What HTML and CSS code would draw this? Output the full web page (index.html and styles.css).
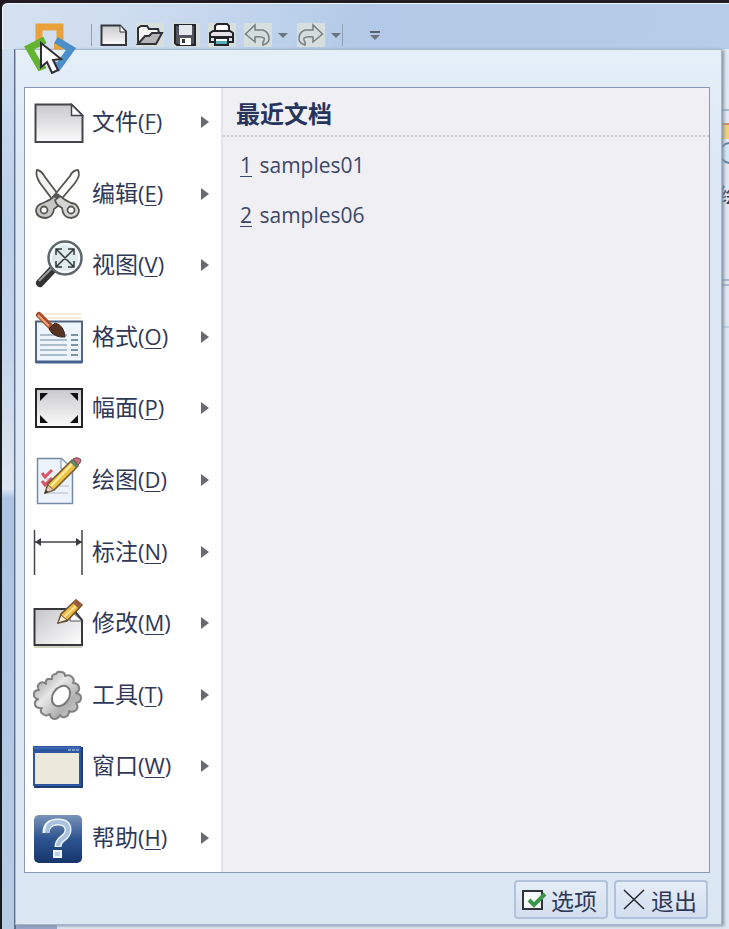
FILE: index.html
```html
<!DOCTYPE html>
<html lang="zh-CN">
  <head>
    <meta charset="UTF-8" />
    <meta name="viewport" content="width=device-width, initial-scale=1.0" />
    <title>菜单</title>
    <link rel="stylesheet" href="styles.css">
  </head>
  <body>
    <svg width="0" height="0" class="defs">
      <defs>
        <linearGradient id="paper" x1="0" y1="0" x2="1" y2="1">
          <stop offset="0" stop-color="#c4c4c8" />
          <stop offset=".55" stop-color="#e6e6e8" />
          <stop offset="1" stop-color="#fff" />
        </linearGradient>
        <linearGradient id="paperDown" x1="0" y1="0" x2="0" y2="1">
          <stop offset="0" stop-color="#c9c9cc" />
          <stop offset="1" stop-color="#fbfbfb" />
        </linearGradient>
        <linearGradient id="metal" x1="0" y1="0" x2="1" y2="1">
          <stop offset="0" stop-color="#8e8e8e" />
          <stop offset=".4" stop-color="#e8e8e8" />
          <stop offset=".7" stop-color="#b0b0b0" />
          <stop offset="1" stop-color="#dcdcdc" />
        </linearGradient>
        <linearGradient id="blue" x1="0" y1="0" x2="0" y2="1">
          <stop offset="0" stop-color="#7893b8" />
          <stop offset=".5" stop-color="#2d5490" />
          <stop offset="1" stop-color="#16356b" />
        </linearGradient>
      </defs>
    </svg>

    <div class="window">
      <div class="side"></div>
      <header class="toolbar">
        <button class="logo" aria-label="菜单">
          <svg width="56" height="56" viewBox="0 0 56 56">
            <g fill="none" stroke-width="7">
              <path d="M17 26V9h21v19h-6" stroke="#e9a23b" />
              <path d="M34 22l15 9-13 18-5-3" stroke="#4a8fca" />
              <path d="M23 22L7 30l11 19 5-2" stroke="#62b32e" />
            </g>
            <path d="M19 25v24l6-5 5 11 6-3-5-10 8-1z" fill="#fff" stroke="#332c33" stroke-width="2" />
          </svg>
        </button>
        <span class="line"></span>
        <button class="tool" aria-label="新建">
          <svg width="28" height="24" viewBox="0 0 28 24"><path d="M1.5 2.5H20l6 6V22H1.500z" fill="url(#paperDown)" stroke="#36373d" stroke-width="2" /><path d="M20 2v7h6z" fill="#fff" stroke="#36373d" /></svg>
        </button>
        <button class="tool tint" aria-label="打开">
          <svg width="28" height="24" viewBox="0 0 28 24"><path d="M2 20V5l3-2h6l2 3h9l1 4" fill="#f5f5f5" stroke="#303038" stroke-width="2" /><path d="M2 21l7-8h4l3-3h10l-6 11z" fill="#b5b5b8" stroke="#303038" stroke-width="2" /></svg>
        </button>
        <button class="tool tint" aria-label="保存">
          <svg width="28" height="24" viewBox="0 0 28 24"><path d="M3 2h20v20H5l-2-2z" fill="#51545f" stroke="#24242b" stroke-width="2" /><path d="M7 2h13v10H7z" fill="#e4e8ef" /><path d="M8 15h11v7H8z" fill="#fff" /><path d="M10 16h3v4h-3z" fill="#33353d" /></svg>
        </button>
        <button class="tool tint" aria-label="打印">
          <svg width="28" height="24" viewBox="0 0 28 24"><path d="M2 10l3-2h17l3 2v9H2z" fill="#e4e1e6" stroke="#24242b" stroke-width="2" /><path d="M7 8V3l2-2h10l2 2v5z" fill="#fff" stroke="#24242b" stroke-width="2" /><path d="M2 14h23" stroke="#24242b" stroke-width="2" /><path d="M7 16h13v6H7z" fill="#56aeb9" stroke="#24242b" stroke-width="2" /><path d="M8 17h11" stroke="#fff" stroke-width="2" /></svg>
        </button>
        <button class="tool wide tint" aria-label="撤消">
          <svg width="28" height="24" viewBox="0 0 28 24"><path d="M1.5 11L11 2v5h8q6 2 6 9 0 4-6 6v-3q2-2 1-4-2-2-9-1v5z" fill="#d5dedf" stroke="#777e83" stroke-width="1.5" /></svg>
          <i class="drop"></i>
        </button>
        <button class="tool wide tint" aria-label="重做">
          <svg width="28" height="24" viewBox="0 0 28 24"><path d="M25.5 11L16 2v5H8q-6 2-6 9 0 4 6 6v-3q-2-2-1-4 2-2 9-1v5z" fill="#d5dedf" stroke="#777e83" stroke-width="1.5" /></svg>
          <i class="drop"></i>
        </button>
        <span class="line"></span>
        <button class="more" aria-label="更多"><i></i><i class="drop"></i></button>
      </header>

      <div class="ribbon">
        <svg width="10" height="280" viewBox="0 0 10 280">
          <path d="M0 61h10M0 231h10M0 236h10" stroke="#9ba9bd" stroke-width="1.5" />
          <path d="M0 76h10v14H0z" fill="#f2d173" />
          <path d="M0 75h10" stroke="#d5885c" stroke-width="2" />
          <circle cx="11" cy="104" r="10" fill="#d3e8f7" stroke="#62819f" stroke-width="2" />
          <path d="M0 278h10" stroke="#a9b8cc" />
        </svg>
        <span class="ribbon-label">绘</span>
      </div>

      <main class="popup">
        <div class="panel">
          <nav class="menu">
            <button class="item">
              <svg width="54" height="56" viewBox="0 0 54 56"><path d="M3.5 10.5h36l11 11V48h-47z" fill="url(#paperDown)" stroke="#44444a" stroke-width="2" /><path d="M39.5 10.5v11h11z" fill="#fff" stroke="#44444a" stroke-width="1.5" /></svg>
              <span class="name">文件<span class="key">(<u>F</u>)</span></span>
            </button>
            <button class="item">
              <svg width="54" height="56" viewBox="0 0 54 56"><g stroke="#55564f" stroke-width="1.8"><path d="M5 4q4 0 8 7l15 20-5 6L8 17Q3 9 5 4z" fill="#f2f3f2" /><path d="M46 4q-5 0-8 6L21 31l5 6 17-20q6-8 3-13z" fill="#fff" /><path d="M23 30l5 5q-1 5-6 8-1 8-8 9-9 0-10-7 0-6 7-8 6-2 12-7z" fill="#c8c9c6" /><path d="M28 30l-5 4q1 5 7 8 1 10 9 10 8-1 8-8-2-7-8-7-5-2-11-7z" fill="#d5d6d3" /><circle cx="12" cy="44" r="3.5" fill="#fff" /><circle cx="39" cy="44" r="3.5" fill="#fff" /><circle cx="25.5" cy="30" r="1.5" fill="#4d557b" /></g></svg>
              <span class="name">编辑<span class="key">(<u>E</u>)</span></span>
            </button>
            <button class="item">
              <svg width="54" height="56" viewBox="0 0 54 56"><path d="M22 31L8 46" stroke="#333" stroke-width="8" stroke-linecap="round" /><path d="M20 31L7 44" stroke="#9b9b9b" stroke-width="2" /><circle cx="33" cy="21" r="16.5" fill="#dfeaec" stroke="#5e686a" stroke-width="2.5" /><circle cx="33" cy="21" r="14" fill="none" stroke="#f8fbfb" stroke-width="2" /><path d="M24 12l18 18M42 12L24 30M24 18v-6h6M36 12h6v6M24 24v6h6M36 30h6v-6" fill="none" stroke="#343a3c" stroke-width="1.5" /></svg>
              <span class="name">视图<span class="key">(<u>V</u>)</span></span>
            </button>
            <button class="item">
              <svg width="54" height="56" viewBox="0 0 54 56"><path d="M10 5h39M14 9h35" stroke="#ead6b9" /><path d="M4 12.5h46V53H4z" fill="#edf4fb" stroke="#526583" stroke-width="2" /><path d="M4 53h46" stroke="#44628f" stroke-width="3" /><path d="M8 26h27M8 31h27M8 36h27M8 41h27M8 46h27" stroke="#99aabd" stroke-width="1.5" /><path d="M39 26h7M39 31h7M39 36h7M39 41h7M39 46h7" stroke="#56718d" stroke-width="1.5" /><path d="M7 6l14 14" stroke="#a64b28" stroke-width="6" stroke-linecap="round" /><path d="M6 6l11 11" stroke="#f0a47c" stroke-width="2" /><path d="M17 20l6-6q9 2 10 14-11 1-16-8z" fill="#593322" stroke="#34231c" /></svg>
              <span class="name">格式<span class="key">(<u>O</u>)</span></span>
            </button>
            <button class="item">
              <svg width="54" height="56" viewBox="0 0 54 56"><path d="M4 9h46v38H4z" fill="url(#paperDown)" stroke="#232326" stroke-width="2" /><path d="M8 13h8l-8 8zM46 13v8l-8-8zM8 43v-8l8 8zM46 43h-8l8-8z" fill="#111" /></svg>
              <span class="name">幅面<span class="key">(<u>P</u>)</span></span>
            </button>
            <button class="item">
              <svg width="54" height="56" viewBox="0 0 54 56"><path d="M5.5 6.500h24l11 11v34h-35z" fill="#edf3fa" stroke="#758aa6" stroke-width="1.5" /><path d="M29 7v10h11" fill="#fff" stroke="#758aa6" /><path d="M14 27h16M14 34h23M12 41h24" stroke="#b1bdcb" /><path d="M10 21l3 4 7-7M10 29l3 4 7-7" fill="none" stroke="#d65867" stroke-width="3" /><path d="M13 41l3-9 24-24 6 6-24 24z" fill="#eec243" stroke="#725631" stroke-width="1.5" /><path d="M19 34L41 11" stroke="#fff0a6" stroke-width="2" /><path d="M38 10l3-3 6 6-3 3z" fill="#658568" /><path d="M41 7q5-3 8 1-1 4-3 5z" fill="#c2737d" stroke="#774446" /><path d="M13 41l3-8 6 5z" fill="#e6cda7" stroke="#705b48" /><path d="M13 41l1-3 2 2z" fill="#222" /></svg>
              <span class="name">绘图<span class="key">(<u>D</u>)</span></span>
            </button>
            <button class="item">
              <svg width="54" height="56" viewBox="0 0 54 56"><path d="M2.500 6v45M50 6v45M3 18h47" stroke="#45464b" stroke-width="1.5" /><path d="M3 18l6-4v8zM50 18l-6-4v8z" fill="#3b3b40" /></svg>
              <span class="name">标注<span class="key">(<u>N</u>)</span></span>
            </button>
            <button class="item">
              <svg width="54" height="56" viewBox="0 0 54 56"><path d="M2.5 14H41l9 11v25H2.5z" fill="url(#paper)" stroke="#37383b" stroke-width="2" /><path d="M2 52h48" stroke="#d2d2c1" stroke-width="2" /><path d="M38 15v11h12z" fill="#fff" stroke="#555" /><path d="M26 28l3-9L44 5l6 5-15 16z" fill="#ecb842" stroke="#695034" stroke-width="1.5" /><path d="M32 22L47 8" stroke="#ffe397" stroke-width="2" /><path d="M41 8l3-4 6 5-4 4z" fill="#995b3f" /><path d="M26 28l3-8 6 5z" fill="#fff0d4" stroke="#695034" /></svg>
              <span class="name">修改<span class="key">(<u>M</u>)</span></span>
            </button>
            <button class="item">
              <svg width="54" height="56" viewBox="0 0 54 56"><path d="M20 12q-1-5 4-5 1-3 5-2 4 0 4 4 4-2 7 1 3 3 1 6 5 0 6 4 1 4-3 6 5 1 5 5 0 4-5 5 3 4 0 7-3 3-7 1 0 5-4 6-3 1-5-2-2 4-6 4-4-1-4-5-4 3-7 0-4-2-1-6-5 1-7-3-1-4 3-6-5-1-4-5 0-4 5-4-3-4 1-7 3-2 6 1-1-4 2-5z" fill="url(#metal)" stroke="#818181" stroke-width="2" stroke-linejoin="round" /><ellipse cx="29" cy="29" rx="8" ry="11" transform="rotate(35 29 29)" fill="#fff" stroke="#777" stroke-width="2" /></svg>
              <span class="name">工具<span class="key">(<u>T</u>)</span></span>
            </button>
            <button class="item">
              <svg width="54" height="56" viewBox="0 0 54 56"><path d="M2 9h49v41H2z" fill="#233d70" /><path d="M1 8h48v40H1z" fill="#2c57a0" /><path d="M3 15h44v31H3z" fill="#ece8dc" /><path d="M2 10h46" stroke="#4d7ac2" /><path d="M36 12h3M40 12h3M44 12h3" stroke="#7f9ccb" stroke-width="2" /></svg>
              <span class="name">窗口<span class="key">(<u>W</u>)</span></span>
            </button>
            <button class="item">
              <svg width="54" height="56" viewBox="0 0 54 56"><rect x="2" y="5" width="48" height="48" rx="5" fill="url(#blue)" /><path d="M14 23q0-11 12-11 10 0 10 8 0 5-6 9-4 3-4 8" fill="none" stroke="#eef4fb" stroke-width="7" /><path d="M15 23q0-11 11-11 10 0 10 8 0 5-6 9-4 3-4 7" fill="none" stroke="#a9c2df" stroke-width="4" /><rect x="22" y="41" width="7" height="6" fill="#bdd0e7" stroke="#eef4fb" stroke-width="2" /></svg>
              <span class="name">帮助<span class="key">(<u>H</u>)</span></span>
            </button>
          </nav>
          <section class="recent">
            <h2>最近文档</h2>
            <a href="#"><u>1</u> samples01</a>
            <a href="#"><u>2</u> samples06</a>
          </section>
        </div>
        <footer class="actions">
          <button>
            <svg width="26" height="26" viewBox="0 0 26 26"><path d="M2 4h19v18H2z" fill="#f8faf9" stroke="#303438" stroke-width="2" /><path d="M8 13l5 5L24 7" fill="none" stroke="#39964b" stroke-width="4" /></svg>
            选项
          </button>
          <button>
            <svg width="26" height="26" viewBox="0 0 26 26"><path d="M3 3l20 19M23 3L3 22" stroke="#24272d" stroke-width="1.5" /></svg>
            退出
          </button>
        </footer>
      </main>
    </div>
  </body>
</html>
```

FILE: styles.css
```css
* {
    box-sizing: border-box;
}
body {
    margin: 0;
    background: #211c22;
    color: #303858;
    font-family: "Open Sans", "Noto Sans CJK SC", sans-serif;
    font-size: 23px;
}
button {
    padding: 0;
    border: none;
    background: none;
    color: inherit;
    font: inherit;
}
svg {
    display: block;
    flex: none;
}
.defs {
    position: absolute;
}
.window {
    position: relative;
    min-height: 100vh;
    padding: 46px 7px 4px 13px;
    overflow: hidden;
    border-top: 3px solid #211c22;
    border-left: 2px solid #18191d;
    border-radius: 8px 0 0 0;
    background: linear-gradient(100deg, #d5e1f0 0, #cbdbef 22%, #b2cae7 50%, #b6cde9 100%) 0 0 / 100% 46px no-repeat, linear-gradient(#98a5c6, #98a5c6) 0 100% / 55px 4px no-repeat, #dfe8f1;
    box-shadow: inset 1px 1px 0 #f2f6fb;
}
.toolbar {
    position: absolute;
    z-index: 2;
    top: 15px;
    left: 20px;
    display: flex;
    align-items: center;
    height: 34px;
}
.logo {
    align-self: flex-start;
    width: 56px;
    margin-right: 13px;
}
.line {
    width: 1px;
    height: 22px;
    background: #8fa0b6;
}
.tool {
    display: flex;
    align-items: center;
    width: 28px;
    margin-left: 8px;
}
.tint svg {
    background: #d6dfdc;
}
.wide {
    width: 45px;
}
.drop {
    margin-left: 6px;
    border-top: 5px solid #6e747e;
    border-left: 5px solid transparent;
    border-right: 5px solid transparent;
}
.more {
    display: grid;
    gap: 2px;
    margin-left: 27px;
}
.more i {
    width: 10px;
    margin: 0;
}
.more i:first-child {
    height: 2px;
    background: #596474;
}
.side {
    position: absolute;
    top: 46px;
    bottom: 0;
    left: 0;
    width: 14px;
    border-right: 2px solid #5c6e87;
    background: linear-gradient(#cfdef0 0, #b9d0ea 20%, #c5d6ec 35%, #dfe5f2 50%, #abc5e2 51%, #b6cce5 100%);
}
.ribbon {
    position: absolute;
    top: 46px;
    right: 0;
    width: 10px;
    height: 280px;
    overflow: hidden;
    background: #e2e9f2;
}
.ribbon-label {
    position: absolute;
    top: 132px;
    left: 0;
    font-size: 20px;
    line-height: 30px;
}
.popup {
    position: relative;
    display: flex;
    flex-direction: column;
    min-height: calc(100vh - 53px);
    padding: 37px 11px 5px 8px;
    border: 1px solid #a8b7cc;
    background: linear-gradient(#e5eff8, #dce8f5 12%, #dce7f4);
    box-shadow: 2px 1px 3px #8292a8;
}
.panel {
    display: flex;
    flex: 1;
    border: 1px solid #8998b3;
    background: #efeff4;
}
.menu {
    display: flex;
    flex-direction: column;
    justify-content: space-between;
    width: 198px;
    border-right: 2px solid #e3e4ec;
    background: #fff;
}
.item {
    display: flex;
    align-items: center;
    height: 68px;
    padding: 0 12px 0 7px;
    text-align: left;
}
.item::after {
    content: "";
    margin-left: auto;
    border-left: 8px solid #686a71;
    border-top: 6px solid transparent;
    border-bottom: 6px solid transparent;
}
.name {
    margin-left: 6px;
    padding-bottom: 4px;
}
.key {
    font-size: 22px;
}
u {
    text-decoration-thickness: 1px;
    text-underline-offset: 3px;
}
.recent {
    flex: 1;
}
.recent h2 {
    margin: 0 0 3px;
    padding: 4px 13px 0;
    border-bottom: 2px dotted #cccdd3;
    color: #27345b;
    font-size: 24px;
    line-height: 43px;
}
.recent a {
    display: block;
    padding: 0 17px;
    color: #3d4667;
    font-size: 21px;
    line-height: 50px;
    text-decoration: none;
}
.recent u {
    margin-right: 2px;
}
.actions {
    display: flex;
    justify-content: flex-end;
    gap: 6px;
    padding: 7px 2px 0 0;
}
.actions button {
    display: flex;
    align-items: center;
    gap: 4px;
    height: 39px;
    padding: 0 9px 0 5px;
    border: 2px solid #b1c2da;
    border-radius: 4px;
    background: linear-gradient(#e5edf7, #d2dfef);
}
```
